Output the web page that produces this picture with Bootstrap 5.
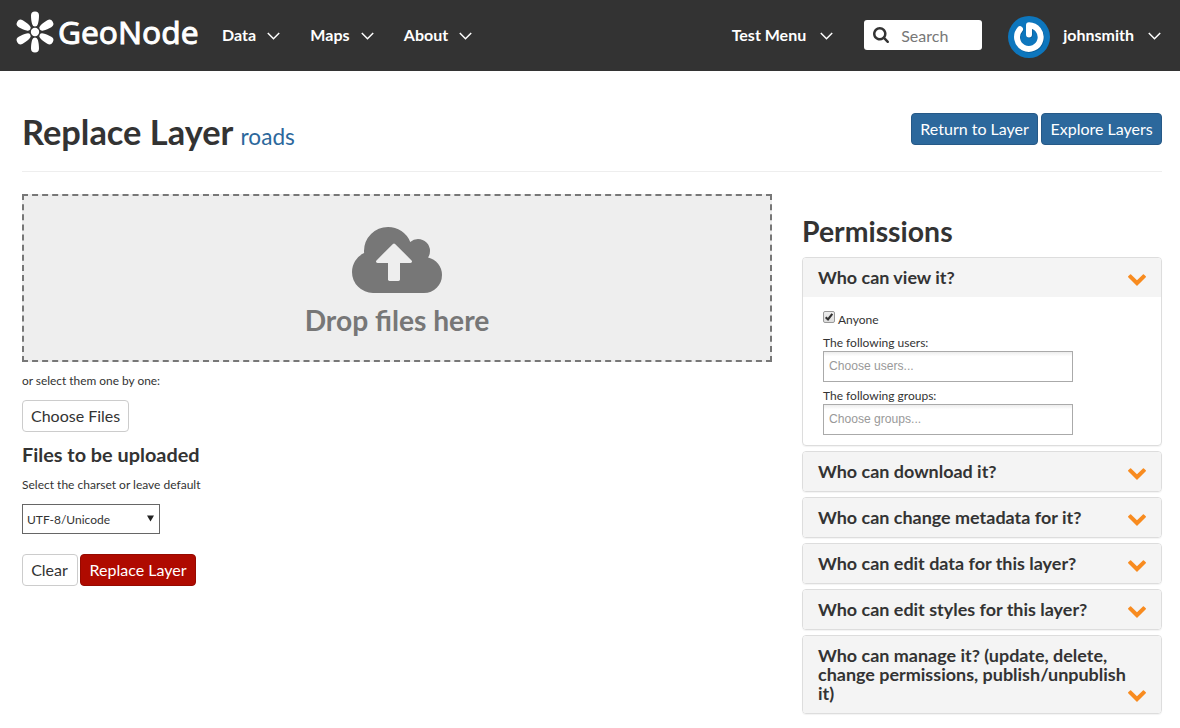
<!DOCTYPE html>
<html lang="en">
<head>
<meta charset="utf-8">
<meta name="viewport" content="width=device-width, initial-scale=1">
<title>Replace Layer - GeoNode</title>
<link href="https://cdn.jsdelivr.net/npm/bootstrap@5.3.0/dist/css/bootstrap.min.css" rel="stylesheet">
<style>
  body { font-family: Lato, sans-serif; font-size: 12px; line-height: 18px; color: #333; background: #fff; overflow: hidden; }
  h1, h2, h3, h4 { font-weight: 700; margin: 0; color: #333; }
  .topbar { height: 71px; padding: 0 19px 0 16px; background: #333; align-items: flex-start; }
  .topbar .nav-link { color: #fff; font-size: 16px; font-weight: 700; line-height: 20px; padding: 25px 0 0; display: flex; align-items: center; gap: 11px; }
  .topbar .nav-link svg { width: 13px; height: 8px; margin-top: 1px; }
  .brand-link { width: 184px; height: 60px; }
  .brand-link svg { overflow: visible; }
  .search-box { width: 118px; height: 30px; margin: 20px 26px 0 31px; padding-left: 9px; background: #fff; border-radius: 3px; gap: 5px; }
  .search-box input { font-size: 16px; line-height: 20px; color: #555; padding: 2px 0 0 7px; width: 80px; }
  .search-box input::placeholder { color: #777; opacity: 1; }
  .content-area { padding: 42px 18px 0 22px; }
  .page-title { height: 59px; border-bottom: 1px solid #eee; margin-bottom: 22px; }
  .page-title h1 { font-size: 34.4px; line-height: 40px; margin-top: -1px; }
  .page-title h1 a { font-size: 22.6px; font-weight: 400; color: #2c689c; text-decoration: none; margin-left: -.5px; }
  .btn { font-size: 16px; line-height: 22px; padding: 4px 8px; border-radius: 4px; height: 32px; white-space: nowrap; }
  .btn-primary { background: #2c689c; border-color: #265987; padding: 4px 8.300px; }
  .btn-danger { background: #af0a00; border-color: #960900; padding: 4px 8.500px; }
  .btn-plain { background: #fff; border-color: #ccc; color: #333; }
  .main-col { width: 750px; }
  .side-col { width: 360px; padding-top: 20px; }
  .drop-zone { height: 168px; border: 2px dashed #777; background: #eee; padding-top: 31px; color: #777; }
  .drop-zone h2 { font-size: 28.2px; line-height: 34px; color: #777; margin-top: 10px; }
  .charset-box { width: 138px; height: 30px; border: 1px solid #666; padding: 1px 5px 0 4px; font-size: 12px; }
  .side-col h3 { font-size: 28.4px; line-height: 34px; margin-bottom: 9px; }
  .perm { border: 1px solid #ddd; border-radius: 4px; box-shadow: 0 1px 1px rgba(0,0,0,.05); margin-bottom: 5px; overflow: hidden; }
  .perm-head { background: #f4f4f4; padding: 10px 15px; }
  .perm h4 { font-size: 17.97px; line-height: 19px; width: 311px; }
  .perm-head svg { width: 18px; height: 12px; flex: none; margin-bottom: 1px; }
  .perm-body { padding: 14px 20px 10px; height: 148px; }
  .perm-body .form-check-input { width: 12px; height: 12px; margin: 0 3px 0 0; border: 1px solid #999; border-radius: 2px; background: linear-gradient(#eee, #ddd); overflow: hidden; }
  .perm-body .form-check-input:checked { background: url("data:image/svg+xml,%3Csvg xmlns='http://www.w3.org/2000/svg' viewBox='0 0 10 10'%3E%3Cpath d='M1.700 5.200 4 7.500 8.300 1.800' fill='none' stroke='%23333' stroke-width='2.100'/%3E%3C/svg%3E") center/10px 10px no-repeat, linear-gradient(#eee, #ddd); }
  .choice-input { display: block; width: 250px; height: 31px; border: 1px solid #aaa; border-radius: 0; padding: 0 5px 2px; font: 12.1px "Liberation Sans", sans-serif; background: linear-gradient(#eee 1%, #fff 15%); }
  .choice-input::placeholder { color: #999; opacity: 1; }
</style>
</head>
<body>
<svg class="d-none" xmlns="http://www.w3.org/2000/svg">
  <symbol id="caret" viewBox="0 0 13 8"><path d="M.8 1 6.500 6.800 12.200 1" fill="none" stroke="#fff" stroke-width="1.500"/></symbol>
  <symbol id="chev" viewBox="90 533 1612 1035"><path fill="#f88b1f" d="M1683 808l-742 741q-19 19-45 19t-45-19l-742-741q-19-19-19-45.500t19-45.500l166-165q19-19 45-19t45 19l531 531 531-531q19-19 45-19t45 19l166 165q19 19 19 45.500t-19 45.500z"/></symbol>
</svg>

<nav class="topbar d-flex">
  <a href="#" class="brand-link d-block" aria-label="GeoNode">
    <svg class="d-block" width="190" height="60" viewBox="16 0 190 60">
      <defs><path id="petal" d="M-4-16.500a4 4 0 0 1 8 0C4-13.500 3.600-10.500 2.900-8Q2.300-5.400 0-5.400T-2.900-8C-3.600-10.500-4-13.500-4-16.500Z"/></defs>
      <g fill="#fff" transform="translate(35 32)">
        <circle r="4.200"/>
        <use href="#petal"/><use href="#petal" transform="rotate(60)"/><use href="#petal" transform="rotate(120)"/>
        <use href="#petal" transform="rotate(180)"/><use href="#petal" transform="rotate(240)"/><use href="#petal" transform="rotate(300)"/>
      </g>
      <text x="58" y="44" fill="#fff" stroke="#fff" stroke-width=".9" font-family="Noto Sans, sans-serif" font-weight="400" font-size="31.500" textLength="140.500" lengthAdjust="spacingAndGlyphs">GeoNode</text>
    </svg>
  </a>
  <div class="d-flex" style="gap:30.300px;margin-left:22px">
    <a class="nav-link" href="#">Data <svg><use href="#caret"/></svg></a>
    <a class="nav-link" href="#">Maps <svg><use href="#caret"/></svg></a>
    <a class="nav-link" href="#">About <svg><use href="#caret"/></svg></a>
  </div>
  <a class="nav-link ms-auto" href="#">Test Menu <svg style="margin-left:3px"><use href="#caret"/></svg></a>
  <form class="search-box d-flex align-items-center">
    <svg width="16" height="16" viewBox="0 0 1664 1664"><path fill="#333" d="M1152 704q0-185-131.500-316.500t-316.500-131.500-316.500 131.500-131.500 316.500 131.500 316.500 316.500 131.500 316.500-131.500 131.500-316.500zm512 832q0 52-38 90t-90 38q-54 0-90-38l-343-342q-179 124-399 124-143 0-273.500-55.500t-225-150-150-225-55.500-273.500 55.500-273.500 150-225 225-150 273.500-55.500 273.500 55.500 225 150 150 225 55.500 273.500q0 220-124 399l343 343q37 37 37 90z"/></svg>
    <input class="border-0 bg-transparent" type="text" placeholder="Search">
  </form>
  <svg width="42" height="42" viewBox="0 0 42 42" style="margin:16px 13px 0 0">
    <circle cx="21" cy="21" r="21" fill="#0d76bd"/>
    <path d="M21 18.500V9.300A11.800 11.800 0 1 1 12 13.300" fill="none" stroke="#075c98" stroke-width="6" stroke-linecap="round" stroke-linejoin="round" transform="translate(.6 .7)"/>
    <path d="M21 18.500V9.300A11.800 11.800 0 1 1 12 13.300" fill="none" stroke="#fff" stroke-width="6" stroke-linecap="round" stroke-linejoin="round"/>
  </svg>
  <a class="nav-link" href="#">johnsmith <svg style="margin-left:3px"><use href="#caret"/></svg></a>
</nav>

<main class="content-area">
  <header class="page-title d-flex justify-content-between align-items-start">
    <h1>Replace Layer <a href="#">roads</a></h1>
    <div class="d-flex" style="gap:3px">
      <a class="btn btn-primary" href="#">Return to Layer</a>
      <a class="btn btn-primary" href="#">Explore Layers</a>
    </div>
  </header>

  <div class="d-flex justify-content-between align-items-start">
    <section class="main-col">
      <div class="drop-zone text-center">
        <svg class="d-block mx-auto" width="90" height="66" viewBox="0 0 1920 1408"><path fill="#777" d="M1280 736q0-14-9-23l-352-352q-9-9-23-9t-23 9l-351 351q-10 12-10 24 0 14 9 23t23 9h224v352q0 13 9.500 22.500t22.500 9.500h192q13 0 22.500-9.500t9.500-22.500v-352h224q13 0 22.500-9.500t9.500-22.500zm640 288q0 159-112.500 271.500t-271.500 112.500h-1088q-185 0-316.500-131.500t-131.500-316.500q0-130 70-240t188-165q-2-30-2-43 0-212 150-362t362-150q156 0 285.500 87t188.500 231q71-62 166-62 106 0 181 75t75 181q0 76-41 138 130 31 213.500 135.500t83.500 238.500z"/></svg>
        <h2>Drop files here</h2>
      </div>
      <p style="margin:10px 0;font-size:11.900px">or select them one by one:</p>
      <button class="btn btn-plain d-block" type="button">Choose Files</button>
      <h4 style="font-size:19.850px;line-height:22px;margin:11px 0">Files to be uploaded</h4>
      <p style="margin:0 0 10px">Select the charset or leave default</p>
      <div class="charset-box d-flex align-items-center justify-content-between" role="listbox">
        <span>UTF-8/Unicode</span>
        <svg width="7" height="7" viewBox="0 0 7 7" style="margin-top:-2px"><path d="M0 .5h7L3.500 6.500z" fill="#222"/></svg>
      </div>
      <div class="d-flex" style="gap:2px;margin-top:20px">
        <a class="btn btn-plain" href="#" style="width:56px;padding-left:7px">Clear</a>
        <a class="btn btn-danger" href="#">Replace Layer</a>
      </div>
    </section>

    <aside class="side-col">
      <h3>Permissions</h3>
      <div class="perm">
        <div class="perm-head d-flex align-items-end justify-content-between"><h4>Who can view it?</h4><svg><use href="#chev"/></svg></div>
        <div class="perm-body">
          <label class="d-flex" style="height:23px"><input class="form-check-input" type="checkbox" checked><span>Anyone</span></label>
          <label class="d-block" for="users" style="height:17px">The following users:</label>
          <input class="choice-input" id="users" type="text" placeholder="Choose users...">
          <label class="d-block" for="groups" style="height:17px;margin-top:5px">The following groups:</label>
          <input class="choice-input" id="groups" type="text" placeholder="Choose groups...">
        </div>
      </div>
      <div class="perm"><div class="perm-head d-flex align-items-end justify-content-between"><h4>Who can download it?</h4><svg><use href="#chev"/></svg></div></div>
      <div class="perm"><div class="perm-head d-flex align-items-end justify-content-between"><h4>Who can change metadata for it?</h4><svg><use href="#chev"/></svg></div></div>
      <div class="perm"><div class="perm-head d-flex align-items-end justify-content-between"><h4>Who can edit data for this layer?</h4><svg><use href="#chev"/></svg></div></div>
      <div class="perm"><div class="perm-head d-flex align-items-end justify-content-between"><h4>Who can edit styles for this layer?</h4><svg><use href="#chev"/></svg></div></div>
      <div class="perm"><div class="perm-head d-flex align-items-end justify-content-between"><h4>Who can manage it? (update, delete, change permissions, publish/unpublish it)</h4><svg><use href="#chev"/></svg></div></div>
    </aside>
  </div>
</main>
<script src="https://cdn.jsdelivr.net/npm/bootstrap@5.3.0/dist/js/bootstrap.bundle.min.js"></script>
</body>
</html>
